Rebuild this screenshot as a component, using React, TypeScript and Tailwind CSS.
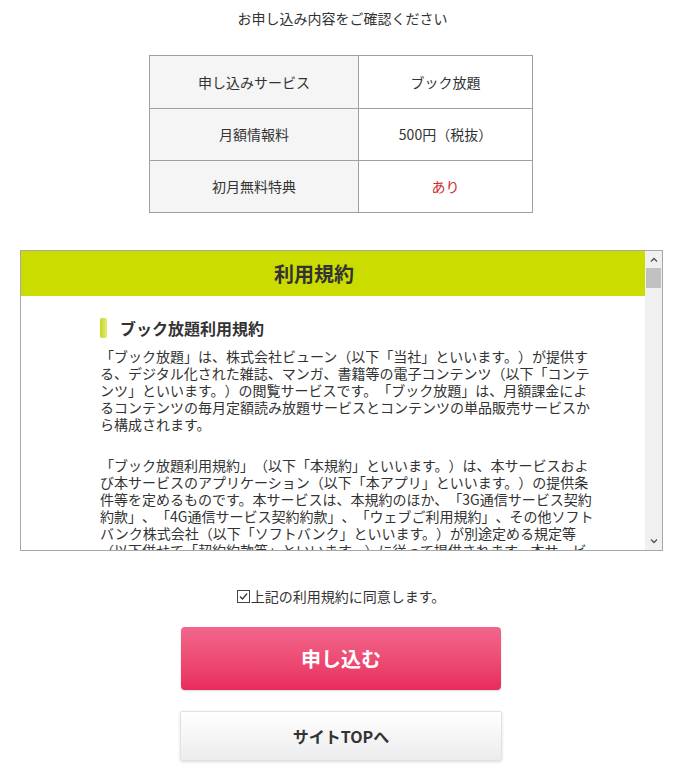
const para1 = [
  "「ブック放題」は、株式会社ビューン（以下「当社」といいます。）が提供す",
  "る、デジタル化された雑誌、マンガ、書籍等の電子コンテンツ（以下「コンテ",
  "ンツ」といいます。）の閲覧サービスです。「ブック放題」は、月額課金によ",
  "るコンテンツの毎月定額読み放題サービスとコンテンツの単品販売サービスか",
  "ら構成されます。",
];

const para2 = [
  "「ブック放題利用規約」（以下「本規約」といいます。）は、本サービスおよ",
  "び本サービスのアプリケーション（以下「本アプリ」といいます。）の提供条",
  "件等を定めるものです。本サービスは、本規約のほか、「3G通信サービス契約",
  "約款」、「4G通信サービス契約約款」、「ウェブご利用規約」、その他ソフト",
  "バンク株式会社（以下「ソフトバンク」といいます。）が別途定める規定等",
  "（以下併せて「契約約款等」といいます。）に従って提供されます。本サービ",
];

const rows = [
  { label: "申し込みサービス", value: "ブック放題", red: false },
  { label: "月額情報料", value: "500円（税抜）", red: false },
  { label: "初月無料特典", value: "あり", red: true },
];

function Para({ lines }: { lines: string[] }) {
  return (
    <p className="text-[14px] leading-[17px] whitespace-nowrap [text-spacing-trim:space-all]">
      {lines.map((l, i) => (
        <span key={i} className="block">
          {l}
        </span>
      ))}
    </p>
  );
}

export default function App() {
  return (
    <div className="w-[685px] h-[774px] bg-white text-[#333] font-['Noto_Sans_CJK_JP','Liberation_Sans',sans-serif] overflow-hidden pt-[8px] [text-spacing-trim:space-all]">
      <p className="text-center text-[14px] leading-[20px]">お申し込み内容をご確認ください</p>

      {/* summary table */}
      <div className="mt-[27px] ml-[149px] w-[384px] border border-[#a0a0a0]">
        {rows.map((r, i) => (
          <div key={i} className={`flex h-[52px] ${i > 0 ? "border-t border-[#a0a0a0]" : ""}`}>
            <div className="w-[209px] bg-[#f5f5f5] border-r border-[#a0a0a0] flex items-center justify-center text-[14px]">
              {r.label}
            </div>
            <div className={`flex-1 flex items-center justify-center text-[14px] ${r.red ? "text-[#d12a2a]" : ""}`}>
              {r.value}
            </div>
          </div>
        ))}
      </div>

      {/* terms box */}
      <div className="mt-[37px] ml-[20px] w-[643px] h-[301px] border border-[#a8a8a8] flex">
        <div className="flex-1 overflow-hidden">
          <div className="h-[45px] bg-[#cbdc00] flex items-center justify-center pr-[38px]">
            <h2 className="text-[20px] font-bold">利用規約</h2>
          </div>
          <div className="pl-[79px] pt-[21px]">
            <div className="flex items-center gap-[13px] h-[22px]">
              <span className="w-[7px] h-[20px] rounded-[2px] bg-gradient-to-r from-[#c3d600] to-[#e3ec7a]" />
              <h3 className="text-[16px] font-bold">ブック放題利用規約</h3>
            </div>
            <div className="mt-[9px]">
              <Para lines={para1} />
            </div>
            <div className="mt-[24px]">
              <Para lines={para2} />
            </div>
          </div>
        </div>
        {/* scrollbar */}
        <div className="w-[17px] bg-[#f0f0f0] flex flex-col items-center">
          <div className="h-[17px] flex items-center justify-center">
            <svg width="8" height="5" viewBox="0 0 8 5">
              <path d="M1 4.5 L4 1.5 L7 4.5" fill="none" stroke="#505050" strokeWidth="1.3" />
            </svg>
          </div>
          <div className="w-[15px] h-[20px] bg-[#c1c1c1]" />
          <div className="flex-1" />
          <div className="h-[17px] flex items-center justify-center">
            <svg width="8" height="5" viewBox="0 0 8 5">
              <path d="M1 0.5 L4 3.5 L7 0.5" fill="none" stroke="#505050" strokeWidth="1.3" />
            </svg>
          </div>
        </div>
      </div>

      {/* agree */}
      <div className="mt-[35px] flex items-center justify-center text-[14px] leading-[20px] pr-[3px]">
        <svg width="13" height="13" viewBox="0 0 13 13" className="mr-[1px]">
          <rect x="0.5" y="0.5" width="12" height="12" fill="white" stroke="#444" strokeWidth="1" />
          <path d="M3 6.5 L5.5 9 L10 3.5" fill="none" stroke="#333" strokeWidth="1.2" />
        </svg>
        <span>上記の利用規約に同意します。</span>
      </div>

      {/* buttons */}
      <button className="mt-[21px] ml-[181px] w-[320px] h-[63px] rounded-[4px] bg-gradient-to-b from-[#f2668c] to-[#e82a5d] shadow-[0_1px_2px_rgba(0,0,0,0.15)] text-white text-[20px] font-bold flex items-center justify-center">
        申し込む
      </button>
      <button className="mt-[21px] ml-[180px] w-[322px] h-[50px] rounded-[2px] border border-[#e2e2e2] bg-gradient-to-b from-white to-[#ececee] shadow-[0_1px_3px_rgba(0,0,0,0.15)] text-[#333] text-[16px] font-bold flex items-center justify-center">
        サイトTOPへ
      </button>
    </div>
  );
}
